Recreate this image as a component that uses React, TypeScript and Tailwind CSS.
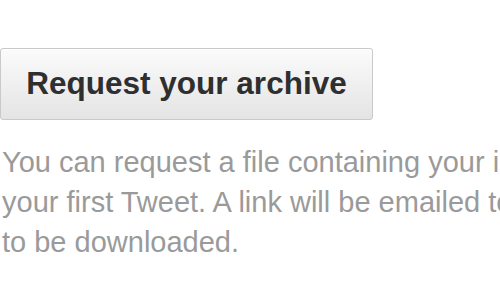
import React from "react";

export default function App() {
  return (
    <div className="h-[300px] w-[500px] overflow-hidden bg-white font-['Liberation_Sans',Arial,sans-serif]">
      <div className="h-[48px]" />
      <button className="flex h-[72px] w-[373px] items-center justify-center rounded-[3px] border border-[#c9c9c9] bg-gradient-to-b from-[#fbfbfb] to-[#e4e4e4] text-[31.5px] font-bold text-[#2f2f2f] shadow-[inset_0_1px_0_#ffffff]">
        Request your archive
      </button>
      <p className="mt-[22px] whitespace-nowrap pl-[2px] text-[29px] leading-[40px] text-[#9a9a9a]">
        You can request a file containing your information, starting with
        <br />
        your first Tweet. A link will be emailed to you when the file is ready
        <br />
        to be downloaded.
      </p>
    </div>
  );
}
